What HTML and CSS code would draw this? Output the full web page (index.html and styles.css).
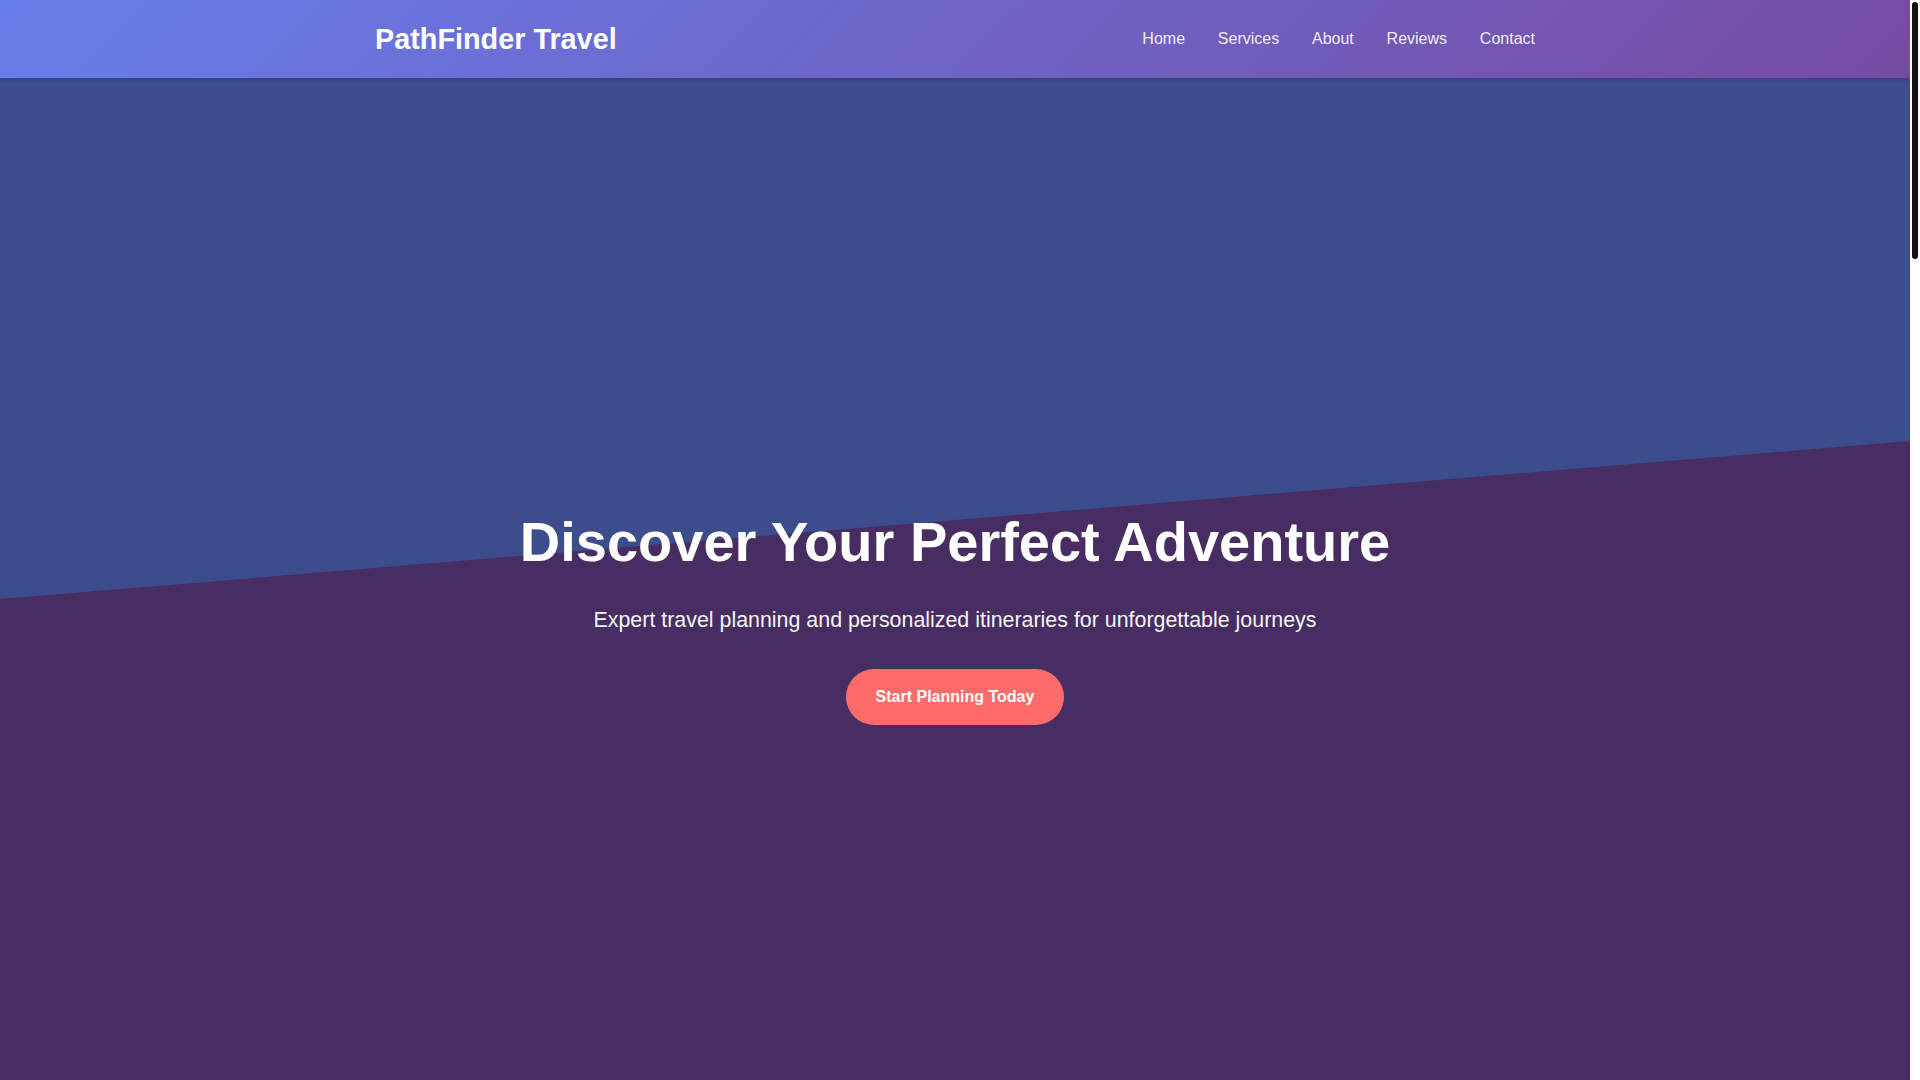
FILE: index.html
```html
<!DOCTYPE html>
<html lang="en">
<head>
<meta charset="UTF-8">
<meta name="viewport" content="width=device-width, initial-scale=1.0">
<title>PathFinder Travel</title>
<link rel="stylesheet" href="styles.css">
</head>
<body>
<div class="scroll-rail" aria-hidden="true"><div class="scroll-thumb"></div></div>

<header class="site-header">
  <div class="container header-inner">
    <a class="logo" href="#home">PathFinder Travel</a>
    <nav>
      <ul class="nav-list">
        <li><a href="#home">Home</a></li>
        <li><a href="#services">Services</a></li>
        <li><a href="#about">About</a></li>
        <li><a href="#reviews">Reviews</a></li>
        <li><a href="#contact">Contact</a></li>
      </ul>
    </nav>
  </div>
</header>

<section class="hero" id="home">
  <div class="hero-content">
    <h1 class="hero-title">Discover Your Perfect Adventure</h1>
    <p class="hero-subtitle">Expert travel planning and personalized itineraries for unforgettable journeys</p>
    <a class="btn" href="#contact">Start Planning Today</a>
  </div>
</section>

<section class="section" id="services">
  <div class="container">
    <h2 class="section-title">Our Services</h2>
    <div class="card-grid">
      <div class="card"><h3>Custom Itineraries</h3><p>Day-by-day plans built around your interests, pace and budget, so every moment of your trip feels like it was made for you.</p></div>
      <div class="card"><h3>Flight &amp; Hotel Booking</h3><p>We search, compare and book the best flights and stays, handling changes and confirmations along the way.</p></div>
      <div class="card"><h3>Guided Tours</h3><p>Local experts show you hidden gems, famous landmarks and authentic food in small, friendly groups.</p></div>
      <div class="card"><h3>Adventure Trips</h3><p>Hiking, diving, safaris and more, planned with safety, gear and permits taken care of in advance.</p></div>
      <div class="card"><h3>Honeymoon Packages</h3><p>Romantic getaways with private transfers, special dinners and unforgettable views for two.</p></div>
      <div class="card"><h3>Travel Insurance</h3><p>Comprehensive coverage options that protect you from cancellations, delays and medical emergencies.</p></div>
    </div>
  </div>
</section>

<section class="section section-alt" id="about">
  <div class="container">
    <h2 class="section-title">About PathFinder</h2>
    <div class="about-body">
      <p>For over fifteen years, PathFinder Travel has helped explorers of all kinds turn their dream destinations into real journeys. Our team of seasoned travel planners has visited more than 90 countries and brings first-hand knowledge to every itinerary we design.</p>
      <p>We believe travel should be effortless and personal. That is why we listen first, plan carefully, and stay available around the clock while you are on the road.</p>
      <p>Whether you are looking for a weekend city break, a family holiday or a once-in-a-lifetime expedition, we will find the path that fits you best.</p>
    </div>
    <div class="stats">
      <div class="stat"><span class="stat-num">15+</span><span class="stat-label">Years of Experience</span></div>
      <div class="stat"><span class="stat-num">12,000</span><span class="stat-label">Happy Travelers</span></div>
      <div class="stat"><span class="stat-num">90+</span><span class="stat-label">Countries Covered</span></div>
      <div class="stat"><span class="stat-num">24/7</span><span class="stat-label">Travel Support</span></div>
    </div>
  </div>
</section>

<section class="section" id="reviews">
  <div class="container">
    <h2 class="section-title">What Our Travelers Say</h2>
    <div class="review-grid">
      <div class="card review"><p>"Our trip to Japan was flawless. Every train, hotel and restaurant was perfectly arranged."</p><span class="reviewer">— Sarah M.</span></div>
      <div class="card review"><p>"PathFinder planned our honeymoon in Bali and it exceeded every expectation we had."</p><span class="reviewer">— David &amp; Emma</span></div>
      <div class="card review"><p>"Friendly, fast and incredibly knowledgeable. I will never plan a trip on my own again."</p><span class="reviewer">— Carlos R.</span></div>
    </div>
  </div>
</section>

<section class="section section-alt" id="contact">
  <div class="container">
    <h2 class="section-title">Contact Us</h2>
    <form class="contact-form">
      <input class="field" type="text" placeholder="Your Name">
      <input class="field" type="email" placeholder="Your Email">
      <input class="field" type="text" placeholder="Destination">
      <textarea class="field field-area" placeholder="Tell us about your dream trip"></textarea>
      <button class="btn btn-submit" type="button">Send Message</button>
    </form>
  </div>
</section>

<footer class="site-footer">
  <div class="container">
    <p>&copy; 2024 PathFinder Travel. All rights reserved.</p>
  </div>
</footer>
</body>
</html>
```

FILE: styles.css
```css
* {
  box-sizing: border-box;
}

body {
  margin: 0 10px 0 0;
  font-family: "Liberation Sans", Arial, sans-serif;
  line-height: 1.6;
  color: #333;
}

/* Decorative scrollbar rail (matches the reference window chrome) */
.scroll-rail {
  position: fixed;
  top: 0;
  right: 0;
  z-index: 10;
  width: 10px;
  height: 100vh;
  background: #fff;
}

.scroll-thumb {
  width: 6px;
  height: 257px;
  margin: 2px auto 0;
  border-radius: 3px;
  background: #111;
}

.container {
  max-width: 1200px;
  margin: 0 auto;
  padding: 0 20px;
}

/* Header */
.site-header {
  position: relative;
  z-index: 2;
  padding: 1rem 0;
  background: linear-gradient(135deg, #667eea 0%, #764ba2 100%);
  box-shadow: 0 2px 3px rgba(0, 0, 0, 0.12);
}

.header-inner {
  display: flex;
  justify-content: space-between;
  align-items: center;
}

.logo {
  font-size: 1.8rem;
  font-weight: bold;
  color: #fff;
  text-decoration: none;
}

.nav-list {
  display: flex;
  gap: 2.05rem;
  list-style: none;
  margin: 0;
  padding: 0;
}

.nav-list a {
  color: rgba(255, 255, 255, 0.9);
  text-decoration: none;
}

/* Hero */
.hero {
  position: relative;
  min-height: 100vh;
  padding-bottom: 14px;
  display: flex;
  align-items: center;
  justify-content: center;
  text-align: center;
  color: #fff;
  background: #3d4c8c;
  overflow: hidden;
}

.hero::after {
  content: "";
  position: absolute;
  inset: 0;
  background: #472d61;
  clip-path: polygon(0 521px, 100% 363px, 100% 100%, 0 100%);
}

.hero-content {
  position: relative;
  z-index: 1;
  padding: 0 20px;
}

.hero-title {
  font-size: 3.5rem;
  margin: 0 0 1rem;
}

.hero-subtitle {
  font-size: 21.4px;
  margin: 0 0 2rem;
  opacity: 0.95;
}

.btn {
  display: inline-block;
  padding: 15px 30px;
  border: none;
  border-radius: 50px;
  background: #ff6b6b;
  color: #fff;
  font-family: inherit;
  font-size: 1rem;
  font-weight: bold;
  line-height: 1.6;
  text-decoration: none;
  cursor: pointer;
}

/* Sections */
.section {
  padding: 6rem 0;
  background: #fff;
}

.section-alt {
  background: #f8f9fa;
}

.section-title {
  margin: 0 0 3rem;
  font-size: 2.5rem;
  text-align: center;
  color: #333;
}

.card-grid {
  display: grid;
  grid-template-columns: repeat(3, 1fr);
  gap: 2rem;
}

.card {
  padding: 2.5rem 2rem;
  border-radius: 10px;
  background: #fff;
  box-shadow: 0 5px 15px rgba(0, 0, 0, 0.08);
  min-height: 260px;
}

.card h3 {
  margin: 0 0 1rem;
  font-size: 1.4rem;
  color: #667eea;
}

.card p {
  margin: 0;
  color: #666;
}

.about-body {
  max-width: 800px;
  margin: 0 auto 3rem;
  text-align: center;
  color: #555;
  font-size: 1.1rem;
}

.about-body p {
  margin: 0 0 1.2rem;
}

.stats {
  display: grid;
  grid-template-columns: repeat(4, 1fr);
  gap: 2rem;
  text-align: center;
}

.stat {
  display: flex;
  flex-direction: column;
  padding: 2rem 1rem;
}

.stat-num {
  font-size: 2.5rem;
  font-weight: bold;
  color: #764ba2;
}

.stat-label {
  color: #666;
}

.review-grid {
  display: grid;
  grid-template-columns: repeat(3, 1fr);
  gap: 2rem;
}

.review p {
  font-style: italic;
  margin-bottom: 1.5rem;
}

.reviewer {
  font-weight: bold;
  color: #333;
}

.contact-form {
  max-width: 600px;
  margin: 0 auto;
  display: flex;
  flex-direction: column;
  gap: 1rem;
}

.field {
  padding: 1rem;
  border: 1px solid #ddd;
  border-radius: 5px;
  font-family: inherit;
  font-size: 1rem;
}

.field-area {
  min-height: 180px;
  resize: vertical;
}

.btn-submit {
  align-self: center;
  margin-top: 1rem;
}

.site-footer {
  padding: 2.5rem 0;
  background: #2c3e50;
  color: #fff;
  text-align: center;
}

.site-footer p {
  margin: 0;
}
```
